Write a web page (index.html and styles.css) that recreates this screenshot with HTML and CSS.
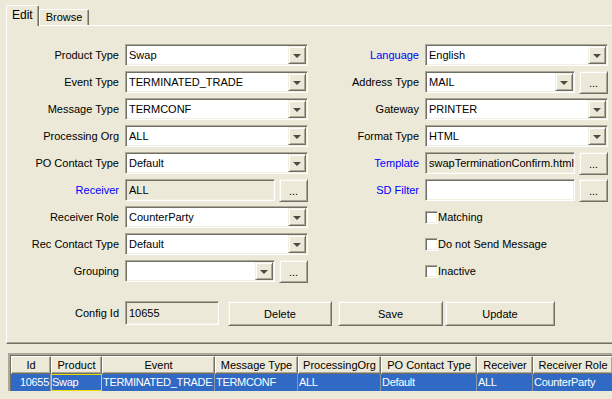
FILE: index.html
```html
<!DOCTYPE html>
<html lang="en">
<head>
    <meta charset="UTF-8">
    <title>Message Config</title>
    <link rel="stylesheet" href="styles.css">
</head>
<body>
    <div class="tabs">
        <div class="tab active">Edit</div>
        <div class="tab">Browse</div>
    </div>

    <div class="pane">
        <div class="form">
            <div class="col left">
                <label>Product Type</label>
                <div class="combo"><span class="val">Swap</span><i class="arrow"></i></div>
                <label>Event Type</label>
                <div class="combo"><span class="val">TERMINATED_TRADE</span><i class="arrow"></i></div>
                <label>Message Type</label>
                <div class="combo"><span class="val">TERMCONF</span><i class="arrow"></i></div>
                <label>Processing Org</label>
                <div class="combo"><span class="val">ALL</span><i class="arrow"></i></div>
                <label>PO Contact Type</label>
                <div class="combo"><span class="val">Default</span><i class="arrow"></i></div>
                <label class="link">Receiver</label>
                <div class="pair">
                    <div class="field ro">ALL</div>
                    <button class="dots">...</button>
                </div>
                <label>Receiver Role</label>
                <div class="combo"><span class="val">CounterParty</span><i class="arrow"></i></div>
                <label>Rec Contact Type</label>
                <div class="combo"><span class="val">Default</span><i class="arrow"></i></div>
                <label>Grouping</label>
                <div class="pair">
                    <div class="combo"><span class="val"></span><i class="arrow"></i></div>
                    <button class="dots">...</button>
                </div>
            </div>

            <div class="col right">
                <label class="link">Language</label>
                <div class="combo"><span class="val">English</span><i class="arrow"></i></div>
                <label>Address Type</label>
                <div class="pair">
                    <div class="combo"><span class="val">MAIL</span><i class="arrow"></i></div>
                    <button class="dots">...</button>
                </div>
                <label>Gateway</label>
                <div class="combo"><span class="val">PRINTER</span><i class="arrow"></i></div>
                <label>Format Type</label>
                <div class="combo"><span class="val">HTML</span><i class="arrow"></i></div>
                <label class="link">Template</label>
                <div class="pair">
                    <div class="field ro">swapTerminationConfirm.html</div>
                    <button class="dots">...</button>
                </div>
                <label class="link">SD Filter</label>
                <div class="pair">
                    <div class="field"></div>
                    <button class="dots">...</button>
                </div>
                <span></span>
                <div class="check"><i class="box"></i>Matching</div>
                <span></span>
                <div class="check"><i class="box"></i>Do not Send Message</div>
                <span></span>
                <div class="check"><i class="box"></i>Inactive</div>
            </div>
        </div>

        <div class="config">
            <label>Config Id</label>
            <div class="field ro cfg">10655</div>
            <button class="btn del">Delete</button>
            <button class="btn save">Save</button>
            <button class="btn upd">Update</button>
        </div>
    </div>

    <div class="grid">
        <div class="head">Id</div>
        <div class="head">Product</div>
        <div class="head">Event</div>
        <div class="head">Message Type</div>
        <div class="head">ProcessingOrg</div>
        <div class="head">PO Contact Type</div>
        <div class="head">Receiver</div>
        <div class="head">Receiver Role</div>

        <div class="cell num">10655</div>
        <div class="cell focus">Swap</div>
        <div class="cell">TERMINATED_TRADE</div>
        <div class="cell">TERMCONF</div>
        <div class="cell">ALL</div>
        <div class="cell">Default</div>
        <div class="cell">ALL</div>
        <div class="cell">CounterParty</div>
    </div>
</body>
</html>
```

FILE: styles.css
```css
body {
    margin: 0;
    background-color: #ece9d8;
    font-family: "Liberation Sans", Arial, sans-serif;
    font-size: 11px;
    color: #000;
}

/* tabs */
.tabs {
    display: flex;
    align-items: flex-end;
    height: 25px;
    padding-left: 6px;
}
.tab {
    box-sizing: border-box;
    height: 16px;
    padding: 0 6px;
    line-height: 14px;
    border: 1px solid;
    border-color: #fff #716f64 transparent #fff;
    border-bottom: none;
    border-radius: 2px 2px 0 0;
    box-shadow: inset -1px 0 #aca899;
}
.tab.active {
    position: relative;
    z-index: 1;
    height: 21px;
    margin-bottom: -1px;
    padding: 0 5px;
    line-height: 18px;
    font-size: 12px;
    background-color: #ece9d8;
}

/* pane */
.pane {
    margin-left: 6px;
    border-top: 1px solid #fff;
    border-left: 1px solid #fff;
    border-bottom: 1px solid #716f64;
    box-shadow: inset 0 -1px #aca899;
    padding: 18px 0 17px 0;
}
.form {
    display: flex;
}
.col {
    display: grid;
    grid-auto-rows: 22px;
    row-gap: 5px;
    column-gap: 6px;
}
.col.left { grid-template-columns: 112px 183px; }
.col.right { grid-template-columns: 111px 183px; }

label {
    text-align: right;
    line-height: 22px;
    white-space: nowrap;
}
label.link { color: #0000ff; }

.combo, .field {
    box-sizing: border-box;
    height: 22px;
    border: 1px solid;
    border-color: #aca899 #fff #fff #aca899;
    box-shadow: inset 1px 1px #716f64, inset -1px -1px #f1efe2;
    background-color: #fff;
}
.combo {
    display: flex;
    padding: 1px;
}
.combo .val {
    flex: 1;
    padding-left: 2px;
    line-height: 18px;
    white-space: nowrap;
}
.arrow {
    box-sizing: border-box;
    width: 18px;
    height: 18px;
    display: flex;
    align-items: center;
    justify-content: center;
    background-color: #ece9d8;
    border: 1px solid;
    border-color: #f1efe2 #716f64 #716f64 #f1efe2;
    box-shadow: inset 1px 1px #fff, inset -1px -1px #aca899;
}
.arrow::after {
    content: '';
    border-left: 4px solid transparent;
    border-right: 4px solid transparent;
    border-top: 4px solid #4d4b44;
    margin-top: 1px;
}
.field {
    padding-left: 3px;
    line-height: 20px;
    white-space: nowrap;
    overflow: hidden;
}
.field.ro { background-color: #ece9d8; }

.pair {
    display: flex;
    gap: 4px;
}
.pair > .combo, .pair > .field { width: 151px; }
.col.right .pair > .combo, .col.right .pair > .field { width: 150px; }

button {
    font-family: inherit;
    font-size: 11px;
    color: #000;
    background-color: #ece9d8;
    border: 1px solid;
    border-color: #f1efe2 #716f64 #716f64 #f1efe2;
    box-shadow: inset 1px 1px #fff, inset -1px -1px #aca899;
    padding: 0;
}
.dots {
    width: 29px;
    height: 23px;
    line-height: 14px;
}

.check {
    display: flex;
    align-items: center;
    white-space: nowrap;
}
.box {
    box-sizing: border-box;
    width: 13px;
    height: 13px;
    border: 1px solid;
    border-color: #aca899 #fff #fff #aca899;
    box-shadow: inset 1px 1px #716f64, inset -1px -1px #f1efe2;
    background-color: #fff;
}

/* config row */
.config {
    display: flex;
    margin-top: 19px;
    height: 25px;
}
.config label {
    width: 112px;
    line-height: 24px;
    margin-right: 6px;
}
.config .cfg {
    width: 94px;
    height: 24px;
    line-height: 22px;
    margin-right: 9px;
}
.btn { height: 25px; font-size: 11px; }
.btn.del { width: 104px; margin-right: 6px; }
.btn.save { width: 105px; margin-right: 2px; }
.btn.upd { width: 110px; }

/* table */
.grid {
    display: grid;
    grid-template-columns: 40px 51px 113px 83px 83px 96px 56px 80px;
    grid-template-rows: 18px 17px;
    margin: 9px 0 0 8px;
    border-top: 2px solid;
    border-left: 2px solid;
    border-color: #aca899;
    box-shadow: inset 1px 1px #716f64;
    padding: 1px 0 0 1px;
}
.head {
    box-sizing: border-box;
    border: 1px solid;
    border-color: #fff #716f64 #716f64 #fff;
    box-shadow: inset -1px -1px #aca899;
    text-align: center;
    line-height: 16px;
    white-space: nowrap;
    overflow: hidden;
}
.cell {
    box-sizing: border-box;
    background-color: #316ac5;
    color: #fff;
    border-right: 1px solid #8d97a8;
    padding-left: 1px;
    line-height: 17px;
    white-space: nowrap;
    overflow: hidden;
    letter-spacing: -0.3px;
}
.cell.num {
    text-align: right;
    padding-right: 1px;
}
.cell.focus {
    border: 1px solid #e8dc00;
    padding-left: 0;
    line-height: 15px;
}
```
